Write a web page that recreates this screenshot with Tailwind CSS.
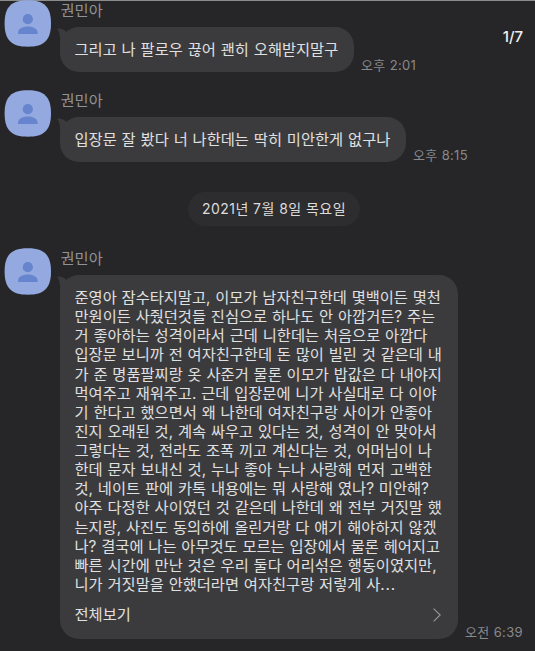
<!DOCTYPE html>
<html lang="ko">
  <head>
    <meta charset="UTF-8" />
    <meta name="viewport" content="width=device-width, initial-scale=1.0" />
    <title>채팅</title>
    <script src="https://cdn.jsdelivr.net/npm/@tailwindcss/browser@4"></script>
  </head>
  <body class="bg-[#262628] font-['Inter','Noto_Sans_CJK_KR',sans-serif] text-[15.3px] text-[#e0e0e1] overflow-hidden">
    <!-- Shared shapes -->
    <svg class="hidden">
      <symbol id="avatar" viewBox="0 0 47 47">
        <path d="M23.8 .3C40.3 .3 47 7 47 23.5S40.3 46.7 23.8 46.7 .6 40 .6 23.5 7.3 .3 23.8 .3Z" fill="#93a9df" />
        <circle cx="23.8" cy="19.2" r="5.1" fill="#6784ce" />
        <path d="M14 33.9v-1.2c0-3.7 4.5-6.1 9.8-6.1s9.8 2.4 9.8 6.1v1.2Z" fill="#6784ce" />
      </symbol>
      <symbol id="tail" viewBox="0 0 16 18">
        <path d="M0 1.6C3.5 1.1 6.5 2.3 9 4.7L16 4v14H3.2C3.2 10 3.2 5.5 0 1.6Z" fill="#3b3b3d" />
      </symbol>
    </svg>

    <main class="relative h-[651px] border-t border-[#8b8d8d]">
      <p class="absolute right-[12px] top-[24px] text-[15px] leading-6 font-medium text-[#f0f0f0]">1/7</p>

      <!-- Message 1 -->
      <section class="flex h-[90px] pl-[4px]">
        <svg class="-mt-px size-[47px] shrink-0"><use href="#avatar" /></svg>
        <div class="ml-[9px]">
          <h2 class="h-[26px] pl-[0.5px] leading-[19px] font-normal text-[#929294]">권민아</h2>
          <div class="flex items-end">
            <div class="relative flex h-[45px] w-[294px] items-center rounded-[19px] bg-[#3b3b3d] pl-[14.5px]">
              <svg class="absolute -left-[3px] top-0 h-[18px] w-[16px]"><use href="#tail" /></svg>
              <p class="relative pt-px whitespace-nowrap [word-spacing:0.6px]">그리고 나 팔로우 끊어 괜히 오해받지말구</p>
            </div>
            <time class="-mb-[2px] ml-[7px] text-[13px] leading-[18px] tracking-[0.35px] text-[#89898b]">오후 2:01</time>
          </div>
        </div>
      </section>

      <!-- Message 2 -->
      <section class="flex h-[101px] pl-[4px]">
        <svg class="-mt-px size-[47px] shrink-0"><use href="#avatar" /></svg>
        <div class="ml-[9px]">
          <h2 class="h-[26px] pl-[0.5px] leading-[19px] font-normal text-[#929294]">권민아</h2>
          <div class="flex items-end">
            <div class="relative flex h-[45px] w-[346px] items-center rounded-[19px] bg-[#3b3b3d] pl-[14.5px]">
              <svg class="absolute -left-[3px] top-0 h-[18px] w-[16px]"><use href="#tail" /></svg>
              <p class="relative pt-px whitespace-nowrap [word-spacing:0.6px]">입장문 잘 봤다 너 나한데는 딱히 미안한게 없구나</p>
            </div>
            <time class="-mb-[2px] ml-[7px] text-[13px] leading-[18px] tracking-[0.35px] text-[#89898b]">오후 8:15</time>
          </div>
        </div>
      </section>

      <!-- Date -->
      <div class="flex h-[57px] pl-[188px]">
        <p class="flex h-[34px] w-[172px] items-center justify-center rounded-full bg-[#2d2d2f] pb-[2px] text-[14px] tracking-[0.45px] whitespace-nowrap text-[#dcdcdd]">2021년 7월 8일 목요일</p>
      </div>

      <!-- Message 3 -->
      <section class="flex pl-[4px]">
        <svg class="-mt-px size-[47px] shrink-0"><use href="#avatar" /></svg>
        <div class="ml-[9px]">
          <h2 class="h-[26px] pl-[0.5px] leading-[19px] font-normal text-[#929294]">권민아</h2>
          <div class="flex items-end">
            <div class="relative h-[364px] w-[398px] rounded-[19px] bg-[#3b3b3d] pl-[14.5px] pt-[13px]">
              <svg class="absolute -left-[3px] top-0 h-[18px] w-[16px]"><use href="#tail" /></svg>
              <p class="relative whitespace-nowrap leading-[19.13px] [word-spacing:0.55px]">
                준영아 잠수타지말고, 이모가 남자친구한데 몇백이든 몇천<br />
                만원이든 사줬던것들 진심으로 하나도 안 아깝거든? 주는<br />
                거 좋아하는 성격이라서 근데 니한데는 처음으로 아깝다<br />
                입장문 보니까 전 여자친구한데 돈 많이 빌린 것 같은데 내<br />
                가 준 명품팔찌랑 옷 사준거 물론 이모가 밥값은 다 내야지<br />
                먹여주고 재워주고. 근데 입장문에 니가 사실대로 다 이야<br />
                기 한다고 했으면서 왜 나한데 여자친구랑 사이가 안좋아<br />
                진지 오래된 것, 계속 싸우고 있다는 것, 성격이 안 맞아서<br />
                그렇다는 것, 전라도 조폭 끼고 계신다는 것, 어머님이 나<br />
                한데 문자 보내신 것, 누나 좋아 누나 사랑해 먼저 고백한<br />
                것, 네이트 판에 카톡 내용에는 뭐 사랑해 였나? 미안해?<br />
                아주 다정한 사이였던 것 같은데 나한데 왜 전부 거짓말 했<br />
                는지랑, 사진도 동의하에 올린거랑 다 얘기 해야하지 않겠<br />
                나? 결국에 나는 아무것도 모르는 입장에서 물론 헤어지고<br />
                빠른 시간에 만난 것은 우리 둘다 어리섞은 행동이였지만,<br />
                니가 거짓말을 안했더라면 여자친구랑 저렇게 사<span class="tracking-[0.9px]">...</span>
              </p>
              <div class="mt-[10px] flex items-center justify-between pr-[17px] leading-[22px]">
                <span>전체보기</span>
                <svg class="h-[14px] w-[8px]" viewBox="0 0 8 14" fill="none" stroke="#98989a" stroke-width="1.1">
                  <path d="M.6.6 7.2 7 .6 13.4" />
                </svg>
              </div>
            </div>
            <time class="-mb-[2px] ml-[7px] text-[13px] leading-[18px] tracking-[0.35px] text-[#89898b]">오전 6:39</time>
          </div>
        </div>
      </section>
    </main>
  </body>
</html>
